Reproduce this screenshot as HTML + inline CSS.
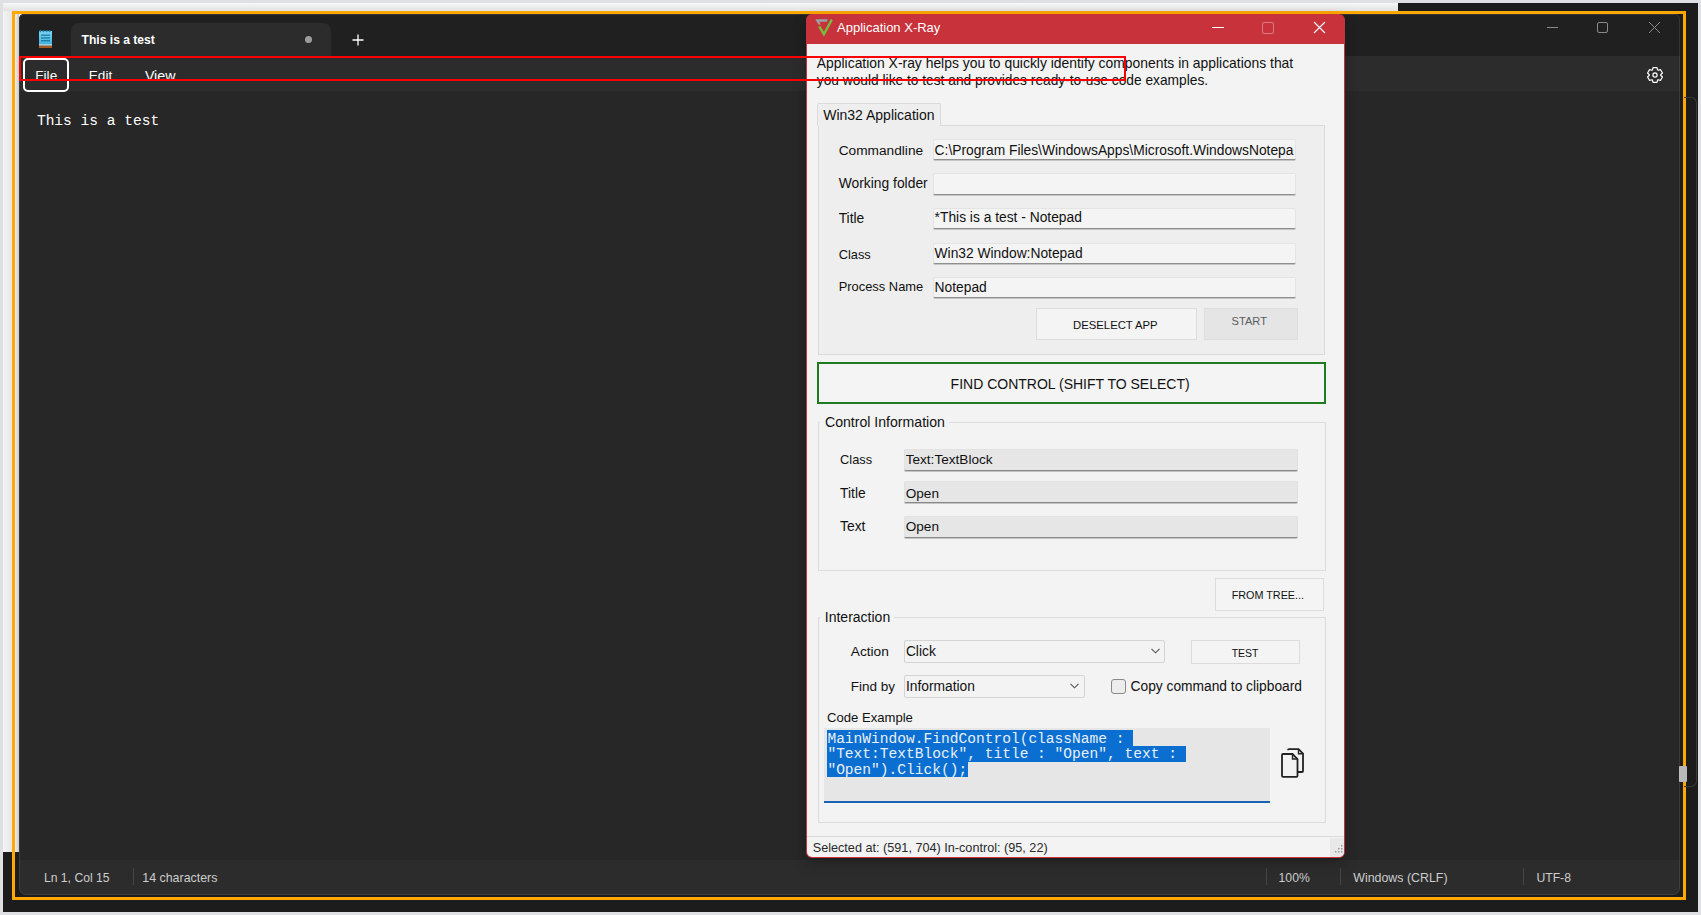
<!DOCTYPE html>
<html><head><meta charset="utf-8"><title>Notepad + Application X-Ray</title>
<style>
*{box-sizing:border-box;margin:0;padding:0}
html,body{width:1701px;height:915px;overflow:hidden}
body{position:relative;background:#dfe0e4;font-family:"Liberation Sans",sans-serif}
.a{position:absolute}
.t{position:absolute;white-space:nowrap;line-height:1}
.box{position:absolute;background:#f4f4f4;border:1px solid #e4e4e4;border-bottom:1px solid #8f8f8f;box-shadow:0 1px 0 #c4c4c4;border-radius:2px}
.box2{position:absolute;background:#e6e6e6;border:1px solid #e2e2e2;border-bottom:1px solid #8a8a8a;box-shadow:0 1px 0 #c4c4c4;border-radius:2px}
</style></head><body>
<div class="a" style="left:3px;top:3px;width:1395.0px;height:849.0px;background:#ececec"></div>
<div class="a" style="left:3px;top:3px;width:1395.0px;height:8.0px;background:linear-gradient(#f7f7f7,#e2e2e2)"></div>
<div class="a" style="left:3px;top:11px;width:9.0px;height:841.0px;background:linear-gradient(90deg,#f4f4f4,#e6e6e6)"></div>
<div class="a" style="left:1398px;top:3px;width:300.0px;height:909.0px;background:#1c1c1c"></div>
<div class="a" style="left:3px;top:852px;width:1695.0px;height:60.0px;background:#1c1c1c"></div>
<div class="a" style="left:15px;top:14px;width:4.0px;height:838.0px;background:linear-gradient(90deg,#eef0f4,#c9c9c9)"></div>
<div class="a" style="left:12px;top:11px;width:1674.0px;height:889.0px;border:3px solid #ffa800"></div>
<div class="a" style="left:19px;top:14px;width:1661.0px;height:881.0px;background:#272727;border-radius:5px 5px 7px 7px;overflow:hidden"></div>
<div class="a" style="left:19px;top:14px;width:1661.0px;height:42.0px;background:#202020;border-radius:5px 5px 0 0"></div>
<div class="a" style="left:71px;top:23px;width:260.0px;height:33.0px;background:#2c2c2c;border-radius:8px 8px 0 0"></div>
<div class="a" style="left:19px;top:56px;width:1661.0px;height:35.0px;background:#2c2c2c"></div>
<div class="a" style="left:19px;top:860px;width:1661.0px;height:35.0px;background:#2c2c2c;border-radius:0 0 7px 7px"></div>
<svg class="a" style="left:38px;top:29px" width="15" height="20" viewBox="0 0 15 20">
<defs><linearGradient id="ng" x1="0" y1="0" x2="0" y2="1"><stop offset="0" stop-color="#7fd6f4"/><stop offset="1" stop-color="#3fb0dc"/></linearGradient></defs>
<rect x="1" y="2" width="13" height="14" fill="url(#ng)"/>
<rect x="1" y="15.5" width="13" height="1.2" fill="#eaf6fa"/>
<rect x="1" y="16.7" width="13" height="2.3" fill="#a45a26"/>
<g fill="#1f7ea6"><rect x="1.5" y="1" width="1.6" height="2.2"/><rect x="4.6" y="1" width="1.6" height="2.2"/><rect x="7.7" y="1" width="1.6" height="2.2"/><rect x="10.8" y="1" width="1.6" height="2.2"/></g>
<g fill="#0f6e96"><rect x="3" y="5.6" width="9" height="1.1"/><rect x="3" y="8.4" width="9" height="1.1"/><rect x="3" y="11.2" width="9" height="1.1"/></g>
</svg>
<div class="t" style="left:81.6px;top:34.25px;font-size:12.1px;color:#fff;font-weight:bold">This is a test</div>
<div class="a" style="left:304.5px;top:35.5px;width:7.5px;height:7.5px;border-radius:50%;background:#9d9d9d"></div>
<svg class="a" style="left:352px;top:34px" width="12" height="12" viewBox="0 0 12 12"><path d="M6 .5v11M.5 6h11" stroke="#fff" stroke-width="1.3"/></svg>
<div class="a" style="left:1547px;top:27px;width:11.0px;height:1.0px;background:#8a8a8a"></div>
<div class="a" style="left:1597px;top:22px;width:11.0px;height:11.0px;border:1px solid #8a8a8a;border-radius:2px"></div>
<svg class="a" style="left:1648px;top:21px" width="13" height="13" viewBox="0 0 13 13"><path d="M1 1L12 12M12 1L1 12" stroke="#8a8a8a" stroke-width="1"/></svg>
<div class="a" style="left:23px;top:58px;width:46.0px;height:34.0px;border:2px solid #fff;border-radius:5px"></div>
<div class="t" style="left:35.3px;top:69.08px;font-size:13.6px;color:#fff;">File</div>
<div class="t" style="left:88.8px;top:69.08px;font-size:13.6px;color:#fff;">Edit</div>
<div class="t" style="left:144.9px;top:68.58px;font-size:14.2px;color:#fff;">View</div>
<svg class="a" style="left:1644.6px;top:64.7px" width="20" height="20" viewBox="0 0 20 20"><path fill="none" stroke="#fff" stroke-width="1.2" stroke-linejoin="round" d="M7.41 4.92 L8.01 2.56 L11.99 2.56 L12.59 4.92 L13.10 5.22 L15.44 4.56 L17.44 8.01 L15.69 9.70 L15.69 10.30 L17.44 11.99 L15.44 15.44 L13.10 14.78 L12.59 15.08 L11.99 17.44 L8.01 17.44 L7.41 15.08 L6.90 14.78 L4.56 15.44 L2.56 11.99 L4.31 10.30 L4.31 9.70 L2.56 8.01 L4.56 4.56 L6.90 5.22 Z"/><circle cx="10" cy="10" r="2.1" fill="none" stroke="#fff" stroke-width="1.2"/></svg>
<div class="t" style="left:36.9px;top:114.04px;font-size:14.57px;color:#fff;font-family:'Liberation Mono',monospace;">This is a test</div>
<div class="t" style="left:43.9px;top:872.37px;font-size:12.2px;color:#cdcdcd;">Ln 1, Col 15</div>
<div class="a" style="left:133px;top:868px;width:1.0px;height:17.0px;background:#454545"></div>
<div class="t" style="left:142.3px;top:872.20px;font-size:12.4px;color:#cdcdcd;">14 characters</div>
<div class="a" style="left:1266px;top:868px;width:1.0px;height:17.0px;background:#454545"></div>
<div class="t" style="left:1278.6px;top:872.37px;font-size:12.2px;color:#cdcdcd;">100%</div>
<div class="a" style="left:1340px;top:868px;width:1.0px;height:17.0px;background:#454545"></div>
<div class="t" style="left:1353.2px;top:872.20px;font-size:12.4px;color:#cdcdcd;">Windows (CRLF)</div>
<div class="a" style="left:1523px;top:868px;width:1.0px;height:17.0px;background:#454545"></div>
<div class="t" style="left:1536.4px;top:872.37px;font-size:12.2px;color:#cdcdcd;">UTF-8</div>
<div class="a" style="left:1684px;top:97px;width:13.0px;height:690.0px;border:1px solid #3a3a3a;border-left:none;border-radius:0 6px 6px 0"></div>
<div class="a" style="left:1679px;top:766px;width:8.0px;height:16.0px;background:#b8b8b8;border-radius:1px"></div>
<div class="a" style="left:19px;top:14px;width:1661.0px;height:881.0px;border:1px solid rgba(255,255,255,.09);border-radius:5px 5px 7px 7px"></div>
<div class="a" style="left:806px;top:14px;width:539.0px;height:844.0px;background:#c8323a;border-radius:6px;box-shadow:0 5px 14px rgba(0,0,0,.25)"></div>
<div class="a" style="left:807px;top:44px;width:537.0px;height:813.0px;background:#f3f3f3;border-radius:0 0 5px 5px"></div>
<svg class="a" style="left:814px;top:18px" width="20" height="19" viewBox="0 0 20 19">
<path d="M1.4 1.2 H13.6 L13 3.8 H5.2 L6.8 6.4 H4.4 Z" fill="#9aa3a6"/>
<path d="M5.2 8.4 L9.9 16.2 L17.8 1.6" fill="none" stroke="#72c23e" stroke-width="2.3" stroke-linejoin="miter"/>
</svg>
<div class="t" style="left:837.0px;top:21.29px;font-size:13px;color:#fff;">Application X-Ray</div>
<div class="a" style="left:1212px;top:27px;width:12.0px;height:1.0px;background:#fff"></div>
<div class="a" style="left:1262px;top:22px;width:12.0px;height:12.0px;border:1px solid rgba(255,255,255,.35);border-radius:2px"></div>
<svg class="a" style="left:1313px;top:21px" width="13" height="13" viewBox="0 0 13 13"><path d="M1 1L12 12M12 1L1 12" stroke="#fff" stroke-width="1.1"/></svg>
<div class="t" style="left:816.8px;top:56.93px;font-size:13.9px;color:#111;">Application X-ray helps you to quickly identify components in applications that</div>
<div class="t" style="left:816.8px;top:74.35px;font-size:13.76px;color:#111;">you would like to test and provides ready-to-use code examples.</div>
<div class="a" style="left:818px;top:125px;width:507.0px;height:230.0px;background:#eeeeee;border:1px solid #dadada"></div>
<div class="a" style="left:817px;top:103px;width:124.0px;height:23.0px;background:#eeeeee;border:1px solid #dadada;border-bottom:none;border-radius:2px 2px 0 0"></div>
<div class="t" style="left:823.2px;top:107.55px;font-size:14px;color:#111;">Win32 Application</div>
<div class="t" style="left:838.7px;top:144.00px;font-size:13.7px;color:#111;">Commandline</div>
<div class="box" style="left:933px;top:139px;width:363px;height:21.3px"></div>
<div class="a" style="left:934px;top:139px;width:360px;height:21.3px;overflow:hidden"><div class="t" style="left:0.6px;top:4.92px;font-size:13.8px;color:#111;">C:\Program Files\WindowsApps\Microsoft.WindowsNotepad_11.2302.26.0_x64__8wekyb3d8bbwe\Notepad\Notepad.exe</div>
</div>
<div class="t" style="left:838.7px;top:177.17px;font-size:13.85px;color:#111;">Working folder</div>
<div class="box" style="left:933px;top:173px;width:363px;height:21.5px"></div>
<div class="t" style="left:838.7px;top:211.72px;font-size:13.8px;color:#111;">Title</div>
<div class="box" style="left:933px;top:208px;width:363px;height:21.4px"></div>
<div class="a" style="left:934px;top:208px;width:360px;height:21.4px;overflow:hidden"><div class="t" style="left:0.6px;top:3.32px;font-size:13.8px;color:#111;">*This is a test - Notepad</div>
</div>
<div class="t" style="left:838.7px;top:249.26px;font-size:12.8px;color:#111;">Class</div>
<div class="box" style="left:933px;top:242.5px;width:363px;height:21.3px"></div>
<div class="a" style="left:934px;top:242.5px;width:360px;height:21.3px;overflow:hidden"><div class="t" style="left:0.6px;top:4.22px;font-size:13.8px;color:#111;">Win32 Window:Notepad</div>
</div>
<div class="t" style="left:838.7px;top:281.18px;font-size:12.9px;color:#111;">Process Name</div>
<div class="box" style="left:933px;top:277px;width:363px;height:21.3px"></div>
<div class="a" style="left:934px;top:277px;width:360px;height:21.3px;overflow:hidden"><div class="t" style="left:0.6px;top:3.92px;font-size:13.8px;color:#111;">Notepad</div>
</div>
<div class="a" style="left:1036px;top:308px;width:161.0px;height:32.0px;background:#f4f4f4;border:1px solid #dcdcdc"></div>
<div class="t" style="left:1073.1px;top:320.13px;font-size:11.3px;color:#111;">DESELECT APP</div>
<div class="a" style="left:1204px;top:308px;width:94.0px;height:32.0px;background:#e5e5e5;border:1px solid #dedede"></div>
<div class="t" style="left:1231.6px;top:316.00px;font-size:11.1px;color:#5c5c5c;">START</div>
<div class="a" style="left:817px;top:362px;width:509.0px;height:42.0px;border:2px solid #1e7b1e;background:#f4f4f4"></div>
<div class="t" style="left:950.6px;top:377.45px;font-size:14px;color:#111;">FIND CONTROL (SHIFT TO SELECT)</div>
<div class="a" style="left:818px;top:422px;width:508.0px;height:149.0px;border:1px solid #dcdcdc"></div>
<div class="a" style="left:820px;top:415px;width:129.0px;height:15.0px;background:#f3f3f3"></div>
<div class="t" style="left:825.0px;top:415.46px;font-size:14.1px;color:#111;">Control Information</div>
<div class="t" style="left:840.1px;top:454.16px;font-size:12.8px;color:#111;">Class</div>
<div class="box2" style="left:903.5px;top:449px;width:394.5px;height:21.5px"></div>
<div class="t" style="left:905.7px;top:453.48px;font-size:13.6px;color:#111;">Text:TextBlock</div>
<div class="t" style="left:840.1px;top:486.52px;font-size:13.8px;color:#111;">Title</div>
<div class="box2" style="left:903.5px;top:481.3px;width:394.5px;height:21.4px"></div>
<div class="t" style="left:905.7px;top:486.68px;font-size:13.6px;color:#111;">Open</div>
<div class="t" style="left:840.1px;top:520.02px;font-size:13.8px;color:#111;">Text</div>
<div class="box2" style="left:903.5px;top:516px;width:394.5px;height:21.6px"></div>
<div class="t" style="left:905.7px;top:520.18px;font-size:13.6px;color:#111;">Open</div>
<div class="a" style="left:1215px;top:578px;width:109.0px;height:33.0px;background:#f4f4f4;border:1px solid #dcdcdc"></div>
<div class="t" style="left:1231.7px;top:590.26px;font-size:10.8px;color:#111;">FROM TREE...</div>
<div class="a" style="left:818px;top:617px;width:508.0px;height:206.0px;border:1px solid #dcdcdc"></div>
<div class="a" style="left:820px;top:610px;width:74.0px;height:15.0px;background:#f3f3f3"></div>
<div class="t" style="left:824.8px;top:610.25px;font-size:14px;color:#111;">Interaction</div>
<div class="t" style="left:850.8px;top:645.00px;font-size:13.7px;color:#111;">Action</div>
<div class="a" style="left:903.5px;top:640px;width:261.5px;height:22.5px;background:#f3f3f3;border:1px solid #d4d4d4;border-radius:2px"></div>
<div class="t" style="left:905.9px;top:644.92px;font-size:13.8px;color:#111;">Click</div>
<svg class="a" style="left:1151px;top:648px" width="9" height="6" viewBox="0 0 9 6"><path d="M.5 .8L4.5 4.8L8.5 .8" fill="none" stroke="#555" stroke-width="1.1"/></svg>
<div class="a" style="left:1190.5px;top:640px;width:109.5px;height:24.0px;background:#f4f4f4;border:1px solid #dcdcdc"></div>
<div class="t" style="left:1231.7px;top:647.71px;font-size:10.5px;color:#111;">TEST</div>
<div class="t" style="left:850.8px;top:679.77px;font-size:13.5px;color:#111;">Find by</div>
<div class="a" style="left:903.5px;top:674.7px;width:181.5px;height:22.9px;background:#f3f3f3;border:1px solid #d4d4d4;border-radius:2px"></div>
<div class="t" style="left:905.9px;top:679.52px;font-size:13.8px;color:#111;">Information</div>
<svg class="a" style="left:1070px;top:683px" width="9" height="6" viewBox="0 0 9 6"><path d="M.5 .8L4.5 4.8L8.5 .8" fill="none" stroke="#555" stroke-width="1.1"/></svg>
<div class="a" style="left:1111px;top:679px;width:15.0px;height:15.0px;background:#ececec;border:1px solid #8a8a8a;border-radius:3px"></div>
<div class="t" style="left:1130.6px;top:679.54px;font-size:13.77px;color:#111;">Copy command to clipboard</div>
<div class="t" style="left:827.0px;top:710.71px;font-size:13.1px;color:#111;">Code Example</div>
<div class="a" style="left:824px;top:728px;width:446.0px;height:75.0px;background:#e6e6e6;border-bottom:2px solid #1a64b4"></div>
<div class="a" style="left:827.4px;top:730px;width:305.8px;height:15.5px;background:#0a6fd0"></div>
<div class="a" style="left:827.4px;top:745.5px;width:358.3px;height:16.0px;background:#0a6fd0"></div>
<div class="a" style="left:827.4px;top:761.5px;width:140.5px;height:15.5px;background:#0a6fd0"></div>
<div class="t" style="left:827.4px;top:731.74px;font-size:14.57px;color:#e9f0fb;font-family:'Liberation Mono',monospace;">MainWindow.FindControl(className :</div>
<div class="t" style="left:827.4px;top:747.44px;font-size:14.57px;color:#e9f0fb;font-family:'Liberation Mono',monospace;">"Text:TextBlock", title : "Open", text :</div>
<div class="t" style="left:827.4px;top:763.24px;font-size:14.57px;color:#e9f0fb;font-family:'Liberation Mono',monospace;">"Open").Click();</div>
<svg class="a" style="left:1279px;top:747px" width="27" height="32" viewBox="0 0 27 32">
<path d="M9 3.2 Q9 2.2 10 2.2 H19.5 L24 6.7 V24 Q24 25 23 25 H18.5" fill="#f3f3f3" stroke="#222" stroke-width="1.8"/>
<path d="M19.5 2.2 V6.7 H24" fill="none" stroke="#222" stroke-width="1.4"/>
<path d="M3 8 Q3 7 4 7 H13.5 L18.5 12 V28.8 Q18.5 29.8 17.5 29.8 H4 Q3 29.8 3 28.8 Z" fill="#f3f3f3" stroke="#222" stroke-width="1.8"/>
<path d="M13.5 7 V12 H18.5" fill="none" stroke="#222" stroke-width="1.4"/>
</svg>
<div class="a" style="left:807px;top:836px;width:537.0px;height:1.0px;background:#dadada"></div>
<div class="a" style="left:1330px;top:838px;width:14.0px;height:19.0px;background:#e8e8e8;border-radius:0 0 5px 0"></div>
<svg class="a" style="left:1334px;top:844px" width="10" height="10" viewBox="0 0 10 10"><g fill="#9a9a9a"><rect x="7" y="1" width="1.5" height="1.5"/><rect x="4" y="4" width="1.5" height="1.5"/><rect x="7" y="4" width="1.5" height="1.5"/><rect x="1" y="7" width="1.5" height="1.5"/><rect x="4" y="7" width="1.5" height="1.5"/><rect x="7" y="7" width="1.5" height="1.5"/></g></svg>
<div class="t" style="left:812.7px;top:841.97px;font-size:12.67px;color:#2a2a2a;">Selected at: (591, 704) In-control: (95, 22)</div>
<div class="a" style="left:19px;top:56px;width:1107.0px;height:24.5px;border:2px solid #ff0000"></div>
</body></html>
